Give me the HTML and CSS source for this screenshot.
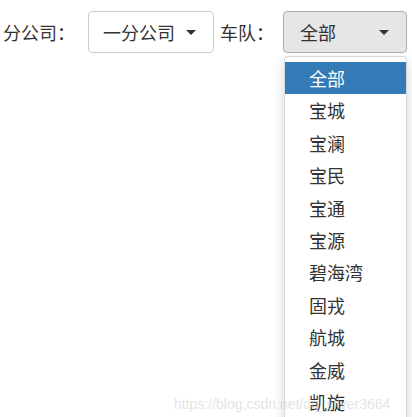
FILE: index.html
```html
<!DOCTYPE html>
<html lang="zh">
<head>
<meta charset="utf-8">
<link rel="stylesheet" href="styles.css">
</head>
<body>
<div class="filters">
  <span class="label">分公司：</span>
  <div class="select select-1">
    <span class="value">一分公司</span>
    <span class="caret"></span>
  </div>
  <span class="label label-2">车队：</span>
  <div class="dropdown">
    <div class="select select-2">
      <span class="value">全部</span>
      <span class="caret"></span>
    </div>
    <ul class="menu">
      <li class="active">全部</li>
      <li>宝城</li>
      <li>宝澜</li>
      <li>宝民</li>
      <li>宝通</li>
      <li>宝源</li>
      <li>碧海湾</li>
      <li>固戎</li>
      <li>航城</li>
      <li>金威</li>
      <li>凯旋</li>
    </ul>
  </div>
</div>
<div class="watermark">https://blog.csdn.net/qq_silver3664</div>
</body>
</html>
```
FILE: styles.css
```css
html, body {
  margin: 0;
  padding: 0;
  background: #fff;
  overflow: hidden;
}
body {
  font-family: "Microsoft YaHei", "Noto Sans CJK SC", sans-serif;
  font-size: 18px;
  color: #333;
  width: 412px;
  height: 417px;
  position: relative;
}
.filters {
  display: flex;
  align-items: center;
  padding: 11px 0 0 3px;
}
.label {
  width: 72px;
  line-height: 42px;
  white-space: nowrap;
}
.label-2 {
  width: 54px;
  margin-left: 6px;
}
.select {
  box-sizing: border-box;
  height: 42px;
  border: 1px solid #ccc;
  border-radius: 4px;
  display: flex;
  align-items: center;
  justify-content: space-between;
  background: #fff;
}
.select-1 {
  width: 126px;
  margin-left: 13px;
  padding: 0 17px 0 14px;
}
.dropdown {
  position: relative;
  margin-left: 9px;
}
.select-2 {
  width: 124px;
  padding: 0 17px 0 16px;
  background: #e6e6e6;
  border-color: #adadad;
}
.caret {
  width: 0;
  height: 0;
  border-top: 5px solid #333;
  border-left: 5px solid transparent;
  border-right: 5px solid transparent;
}
.menu {
  position: absolute;
  left: 1px;
  top: 45px;
  width: 123px;
  box-sizing: border-box;
  margin: 0;
  padding: 5px 0;
  list-style: none;
  background: #fff;
  border: 1px solid rgba(0,0,0,0.15);
  border-radius: 4px;
  box-shadow: 0 6px 12px rgba(0,0,0,0.175);
}
.menu li {
  height: 32.4px;
  line-height: 32.4px;
  padding-left: 24px;
  white-space: nowrap;
}
.menu li.active {
  background: #337ab7;
  color: #fff;
}
.watermark {
  position: absolute;
  left: 174px;
  top: 396px;
  font-family: "Liberation Sans", Arial, sans-serif;
  font-size: 14px;
  color: rgba(200,200,200,0.5);
  white-space: nowrap;
  pointer-events: none;
}
```
